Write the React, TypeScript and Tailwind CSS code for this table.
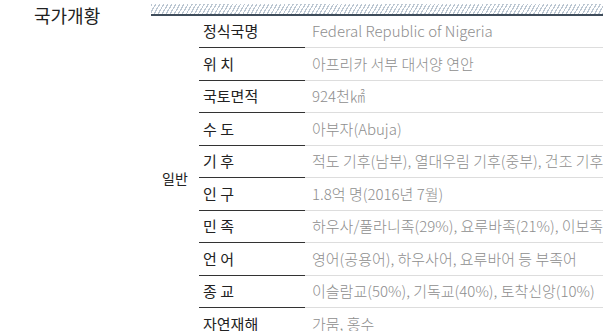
const ROWS: [string, string][] = [
  ["정식국명", "Federal Republic of Nigeria"],
  ["위 치", "아프리카 서부 대서양 연안"],
  ["국토면적", "924천㎢"],
  ["수 도", "아부자(Abuja)"],
  ["기 후", "적도 기후(남부), 열대우림 기후(중부), 건조 기후(북부)"],
  ["인 구", "1.8억 명(2016년 7월)"],
  ["민 족", "하우사/풀라니족(29%), 요루바족(21%), 이보족(18%)"],
  ["언 어", "영어(공용어), 하우사어, 요루바어 등 부족어"],
  ["종 교", "이슬람교(50%), 기독교(40%), 토착신앙(10%)"],
  ["자연재해", "가뭄, 홍수"],
];

export default function App() {
  return (
    <div className="w-[603px] h-[331px] overflow-hidden bg-white flex font-['Noto_Sans_CJK_KR','Noto_Sans',sans-serif]">
      {/* Section title */}
      <div className="w-[151px] shrink-0 pl-[34px] pt-[2px] text-[18px] leading-[26px] text-[#222]">
        국가개황
      </div>

      <div className="flex-1 min-w-0 flex flex-col">
        {/* Hatched header bar */}
        <div className="shrink-0 mt-[4px] h-[11.5px] border-b-[2.5px] border-[#3f4d5b] bg-[repeating-linear-gradient(120deg,#bcc7d2_0px,#bcc7d2_1.2px,#ffffff_1.2px,#ffffff_3.5px)]" />

        <div className="flex shrink-0">
          <div className="w-[48px] shrink-0 flex items-center justify-center text-[14px] text-[#222]">
            일반
          </div>
          <div className="flex-1 min-w-0">
            {ROWS.map(([label, value]) => (
              <div key={label} className="flex h-[32.5px]">
                <div className="w-[106px] shrink-0 border-b border-[#333] pl-[4px] flex items-center text-[15px] text-[#222]">
                  {label}
                </div>
                <div className="flex-1 min-w-0 border-b border-[#ddd] pl-[7px] flex items-center text-[15px] font-light text-[#8e8e8e] whitespace-nowrap overflow-hidden">
                  {value}
                </div>
              </div>
            ))}
          </div>
        </div>
      </div>
    </div>
  );
}
